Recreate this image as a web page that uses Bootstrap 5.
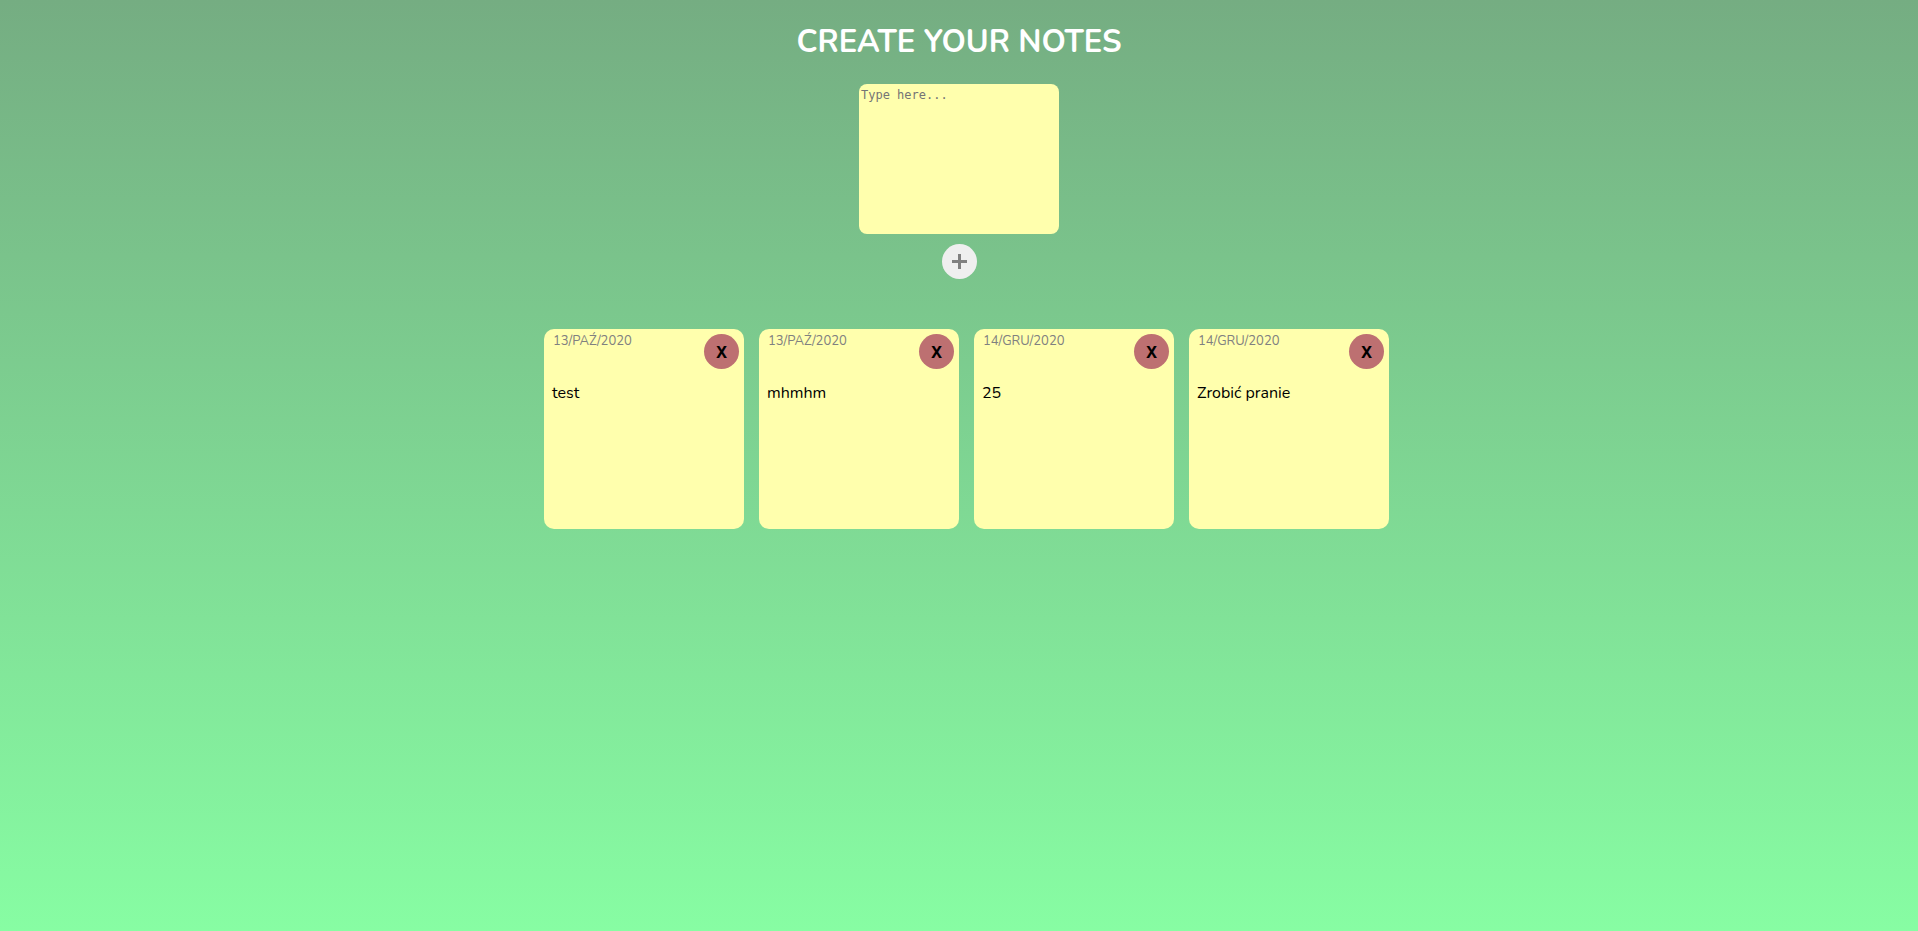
<!DOCTYPE html>
<html lang="en">
<head>
<meta charset="utf-8">
<meta name="viewport" content="width=device-width, initial-scale=1">
<title>Notes</title>
<link href="https://cdn.jsdelivr.net/npm/bootstrap@5.3.0/dist/css/bootstrap.min.css" rel="stylesheet">
<style>
body {
  font-family: Nunito, "Noto Sans", sans-serif;
  color: #000;
  background: linear-gradient(180deg, #75ad82 0%, #87fda3 100%) no-repeat;
}
.page-title {
  font-size: 31px;
  line-height: 44px;
  font-weight: 700;
  color: #fff;
}
.note-form { gap: 10px; }
.note-input {
  width: 200px;
  height: 150px;
  padding: 3px 2px;
  border: 0;
  border-radius: 8px;
  background: #ffffad;
  font: 12px/16px "DejaVu Sans Mono", monospace;
  resize: none;
}
.note-input::placeholder { color: #757575; }
.round-btn {
  width: 35px;
  height: 35px;
}
.add-btn { background: #efefef; color: #808080; }
.delete-btn {
  background: #bd7071;
  color: #000;
  font: 700 16px/20px "Noto Sans", sans-serif;
}
.note-list { gap: 15px; margin-top: 50px; padding-left: 15px; }
.note {
  width: 200px;
  height: 200px;
  border-radius: 10px;
  background: #ffffad;
}
.note-head { height: 50px; padding: 5px 5px 0 9px; }
.note-date {
  font-size: 13px;
  line-height: 14px;
  color: #808080;
}
.note-text {
  padding: 3px 8px 0;
  font-size: 16px;
  line-height: 22px;
}
</style>
</head>
<body class="min-vh-100">
<main class="d-flex flex-column align-items-center pt-3">
  <h1 class="page-title mt-1 mb-0 text-center">CREATE YOUR NOTES</h1>
  <form class="note-form d-flex flex-column align-items-center mt-3 pt-1">
    <textarea class="note-input d-block" placeholder="Type here..." aria-label="Note text"></textarea>
    <button type="button" class="round-btn add-btn d-flex align-items-center justify-content-center border-0 rounded-circle p-0" aria-label="Add note">
      <svg width="15" height="15" viewBox="0 0 15 15" aria-hidden="true"><path d="M6 0h3v6h6v3H9v6H6V9H0V6h6z" fill="currentColor"/></svg>
    </button>
  </form>
  <section class="note-list d-flex flex-wrap justify-content-center" aria-label="Notes">
    <article class="note">
      <div class="note-head d-flex justify-content-between align-items-start">
        <time class="note-date">13/PAŹ/2020</time>
        <button type="button" class="round-btn delete-btn border-0 rounded-circle p-0">X</button>
      </div>
      <p class="note-text mb-0">test</p>
    </article>
    <article class="note">
      <div class="note-head d-flex justify-content-between align-items-start">
        <time class="note-date">13/PAŹ/2020</time>
        <button type="button" class="round-btn delete-btn border-0 rounded-circle p-0">X</button>
      </div>
      <p class="note-text mb-0">mhmhm</p>
    </article>
    <article class="note">
      <div class="note-head d-flex justify-content-between align-items-start">
        <time class="note-date">14/GRU/2020</time>
        <button type="button" class="round-btn delete-btn border-0 rounded-circle p-0">X</button>
      </div>
      <p class="note-text mb-0">25</p>
    </article>
    <article class="note">
      <div class="note-head d-flex justify-content-between align-items-start">
        <time class="note-date">14/GRU/2020</time>
        <button type="button" class="round-btn delete-btn border-0 rounded-circle p-0">X</button>
      </div>
      <p class="note-text mb-0">Zrobić pranie</p>
    </article>
  </section>
</main>
<script src="https://cdn.jsdelivr.net/npm/bootstrap@5.3.0/dist/js/bootstrap.bundle.min.js"></script>
</body>
</html>
